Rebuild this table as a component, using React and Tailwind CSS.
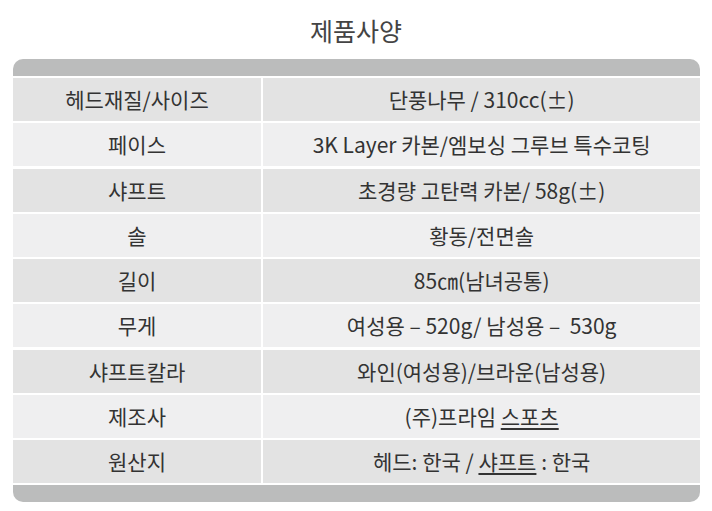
const specs = [
  { label: "헤드재질/사이즈", value: "단풍나무 / 310cc(±)" },
  { label: "페이스", value: "3K Layer 카본/엠보싱 그루브 특수코팅" },
  { label: "샤프트", value: "초경량 고탄력 카본/ 58g(±)" },
  { label: "솔", value: "황동/전면솔" },
  { label: "길이", value: "85㎝(남녀공통)" },
  { label: "무게", value: "여성용 – 520g/ 남성용 –\u00a0\u00a0530g" },
  { label: "샤프트칼라", value: "와인(여성용)/브라운(남성용)" },
  {
    label: "제조사",
    value: (
      <>
        (주)프라임 <span className="underline underline-offset-[3px]">스포츠</span>
      </>
    ),
  },
  {
    label: "원산지",
    value: (
      <>
        헤드: 한국 / <span className="underline underline-offset-[3px]">샤프트</span> : 한국
      </>
    ),
  },
];

export default function App() {
  return (
    <div
      className="w-[712px] h-[511px] bg-white text-[#333]"
      style={{ fontFamily: '"Noto Sans CJK KR", "Noto Sans", sans-serif' }}
    >
      <h1 className="pt-[14px] text-center text-[25px] leading-[32px] text-[#444] font-normal">
        제품사양
      </h1>
      <div className="mx-[13px] mt-[13px] w-[687px] flex flex-col gap-[2px]">
        <div className="h-[17px] rounded-t-[10px] bg-[#bbbcbc]"></div>
        <div className="grid grid-cols-[248px_1fr] gap-[2.3px] bg-white">
          {specs.map((row, i) => {
            const bg = i % 2 === 0 ? "bg-[#e3e3e3]" : "bg-[#efeff0]";
            return (
              <div key={i} className="contents">
                <div className={`h-[43px] flex items-center justify-center text-[21px] leading-none ${bg}`}>
                  {row.label}
                </div>
                <div className={`h-[43px] flex items-center justify-center text-[21px] leading-none ${bg}`}>
                  <span>{row.value}</span>
                </div>
              </div>
            );
          })}
        </div>
        <div className="h-[17px] rounded-b-[10px] bg-[#bbbcbc]"></div>
      </div>
    </div>
  );
}
